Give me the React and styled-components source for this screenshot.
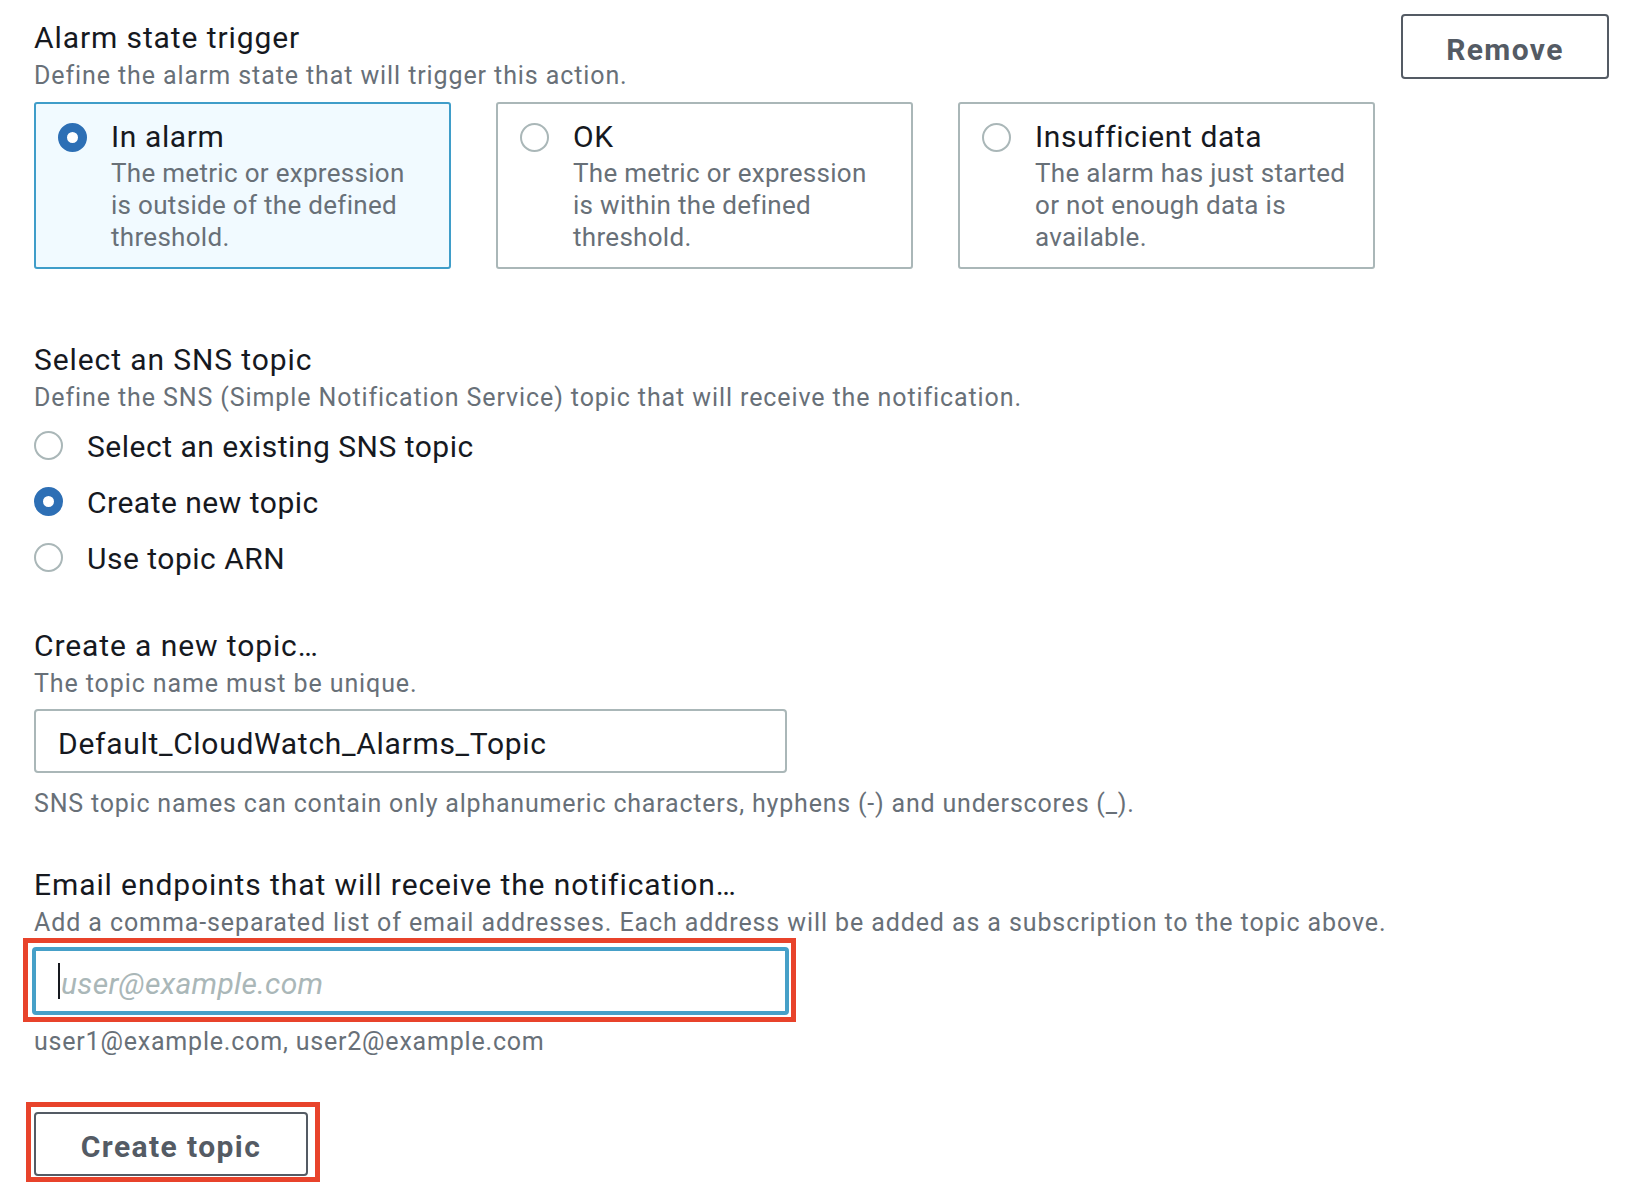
import React from "react"
import styled, { createGlobalStyle } from "styled-components"

const GlobalStyle = createGlobalStyle`
  html, body {
    margin: 0;
    padding: 0;
    background: #ffffff;
  }
  body {
    font-family: Roboto, "Liberation Sans", sans-serif;
    color: #16191f;
  }
  * {
    box-sizing: border-box;
  }
`

const Page = styled.div`
  padding: 14px 17px 0 34px;
  width: 1626px;
  min-height: 1186px;
`

const HeaderRow = styled.div`
  display: flex;
  justify-content: space-between;
  align-items: flex-start;
`

const Section = styled.section`
  margin-top: ${(p) => p.$top || 0}px;
`

const Heading = styled.h2`
  margin: 0;
  padding-top: ${(p) => p.$pad || 0}px;
  font-size: 30px;
  line-height: 36px;
  font-weight: 400;
  letter-spacing: 0.9px;
  color: #16191f;
`

const Description = styled.p`
  margin: 3px 0 0;
  font-size: 25px;
  line-height: 34px;
  letter-spacing: 0.9px;
  color: #687078;
`

const Hint = styled.p`
  margin: ${(p) => p.$top || 0}px 0 0;
  font-size: 25px;
  line-height: 34px;
  letter-spacing: 0.8px;
  color: #687078;
`

const Tiles = styled.div`
  display: grid;
  grid-template-columns: repeat(3, 417px);
  column-gap: 45px;
  margin-top: 9px;
`

const Tile = styled.div`
  display: flex;
  align-items: flex-start;
  gap: 24px;
  height: 167px;
  padding: 15px 20px 0 22px;
  border: 2px solid ${(p) => (p.$selected ? "#3f9dc9" : "#aab7b8")};
  border-radius: 3px;
  background: ${(p) => (p.$selected ? "#f1faff" : "#ffffff")};
`

const Radio = styled.span`
  flex: none;
  display: inline-block;
  width: 29px;
  height: 29px;
  margin-top: ${(p) => p.$offset || 0}px;
  border-radius: 50%;
  background: #ffffff;
  border: ${(p) => (p.$checked ? "9px solid #2d6fb5" : "2px solid #aab7b8")};
`

const TileText = styled.div`
  display: flex;
  flex-direction: column;
`

const TileLabel = styled.span`
  font-size: 30px;
  line-height: 36px;
  letter-spacing: 0.6px;
  color: #16191f;
  margin-bottom: 2px;
`

const TileDesc = styled.span`
  font-size: 26px;
  line-height: 32px;
  letter-spacing: 0.3px;
  color: #687078;
`

const OutlineButton = styled.button`
  height: ${(p) => p.$height || 64}px;
  width: ${(p) => p.$width}px;
  padding: 5px 0 0;
  border: 2px solid #545b64;
  border-radius: 4px;
  background: #ffffff;
  color: #545b64;
  font-family: Roboto, "Liberation Sans", sans-serif;
  font-size: 30px;
  font-weight: 700;
  letter-spacing: 1.4px;
  cursor: pointer;
`

const OptionList = styled.div`
  display: flex;
  flex-direction: column;
  margin-top: 2px;
`

const Option = styled.label`
  display: flex;
  align-items: center;
  gap: 24px;
  height: 56px;
  font-size: 30px;
  letter-spacing: 0.5px;
  color: #16191f;
`

const OptionText = styled.span`
  line-height: 36px;
  padding-top: 4px;
`

const TextField = styled.div`
  display: flex;
  align-items: center;
  width: ${(p) => p.$width}px;
  height: ${(p) => p.$height}px;
  margin-top: ${(p) => p.$top || 0}px;
  padding: 4px 0 0 ${(p) => p.$pad}px;
  border: ${(p) => (p.$focused ? "4px solid #46a0c8" : "2px solid #aab7b8")};
  border-radius: 4px;
  background: #ffffff;
  font-size: 30px;
  letter-spacing: 0.7px;
  color: #16191f;
`

const Caret = styled.span`
  display: inline-block;
  width: 2px;
  height: 36px;
  margin: -4px 1px 0 0;
  background: #16191f;
`

const Placeholder = styled.span`
  font-style: italic;
  letter-spacing: 0.3px;
  color: #aab7b8;
`

const Highlight = styled.div`
  display: inline-block;
  border: 5px solid #e8432b;
  margin-left: ${(p) => p.$left}px;
  margin-top: ${(p) => p.$top || 0}px;
  padding: ${(p) => p.$pad};
`

const tiles = [
  {
    label: "In alarm",
    desc: ["The metric or expression", "is outside of the defined", "threshold."],
    selected: true,
  },
  {
    label: "OK",
    desc: ["The metric or expression", "is within the defined", "threshold."],
  },
  {
    label: "Insufficient data",
    desc: ["The alarm has just started", "or not enough data is", "available."],
  },
]

const topicOptions = [
  { label: "Select an existing SNS topic" },
  { label: "Create new topic", checked: true },
  { label: "Use topic ARN" },
]

export default function App() {
  return (
    <Page>
      <GlobalStyle />
      <HeaderRow>
        <div>
          <Heading $pad={6}>Alarm state trigger</Heading>
          <Description>Define the alarm state that will trigger this action.</Description>
          <Tiles>
            {tiles.map((t) => (
              <Tile key={t.label} $selected={t.selected}>
                <Radio $checked={t.selected} $offset={4} />
                <TileText>
                  <TileLabel>{t.label}</TileLabel>
                  {t.desc.map((line) => (
                    <TileDesc key={line}>{line}</TileDesc>
                  ))}
                </TileText>
              </Tile>
            ))}
          </Tiles>
        </div>
        <OutlineButton $width={208} $height={65}>Remove</OutlineButton>
      </HeaderRow>

      <Section $top={73}>
        <Heading>Select an SNS topic</Heading>
        <Description>
          Define the SNS (Simple Notification Service) topic that will receive the notification.
        </Description>
        <OptionList>
          {topicOptions.map((o) => (
            <Option key={o.label}>
              <Radio $checked={o.checked} />
              <OptionText>{o.label}</OptionText>
            </Option>
          ))}
        </OptionList>
      </Section>

      <Section $top={43}>
        <Heading>Create a new topic…</Heading>
        <Description>The topic name must be unique.</Description>
        <TextField $width={753} $height={64} $top={8} $pad={22}>
          Default_CloudWatch_Alarms_Topic
        </TextField>
        <Hint $top={14}>
          SNS topic names can contain only alphanumeric characters, hyphens (-) and underscores (_).
        </Hint>
      </Section>

      <Section $top={46}>
        <Heading>Email endpoints that will receive the notification…</Heading>
        <Description>
          Add a comma-separated list of email addresses. Each address will be added as a subscription to the topic above.
        </Description>
        <Highlight $left={-11} $top={-2} $pad="4px 2px 2px 4px">
          <TextField $width={757} $height={68} $pad={22} $focused>
            <Caret />
            <Placeholder>user@example.com</Placeholder>
          </TextField>
        </Highlight>
        <Hint $top={3}>user1@example.com, user2@example.com</Hint>
        <Highlight $left={-8} $top={43} $pad="5px 7px 1px 3px">
          <OutlineButton $width={274} $height={64}>Create topic</OutlineButton>
        </Highlight>
      </Section>
    </Page>
  )
}
